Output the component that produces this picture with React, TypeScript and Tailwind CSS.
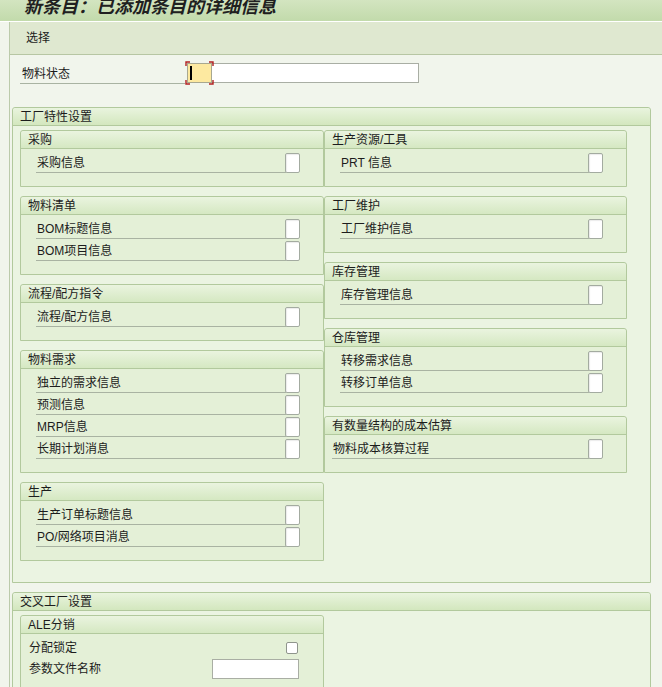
import React from "react";

type Row = { label: string };
type Group = { title: string; rows: Row[]; indent?: string };

const leftGroups: Group[] = [
  { title: "采购", rows: [{ label: "采购信息" }] },
  { title: "物料清单", rows: [{ label: "BOM标题信息" }, { label: "BOM项目信息" }] },
  { title: "流程/配方指令", rows: [{ label: "流程/配方信息" }] },
  {
    title: "物料需求",
    rows: [{ label: "独立的需求信息" }, { label: "预测信息" }, { label: "MRP信息" }, { label: "长期计划消息" }],
  },
  { title: "生产", rows: [{ label: "生产订单标题信息" }, { label: "PO/网络项目消息" }] },
];

const rightGroups: Group[] = [
  { title: "生产资源/工具", rows: [{ label: "PRT 信息" }] },
  { title: "工厂维护", rows: [{ label: "工厂维护信息" }] },
  { title: "库存管理", rows: [{ label: "库存管理信息" }] },
  { title: "仓库管理", rows: [{ label: "转移需求信息" }, { label: "转移订单信息" }] },
  { title: "有数量结构的成本估算", rows: [{ label: "物料成本核算过程" }], indent: "pl-[7px]" },
];

function CheckBox() {
  return (
    <div className="h-[20px] w-[15px] shrink-0 rounded-[2px] border border-[#a3aba0] bg-white shadow-[inset_1px_1px_1px_rgba(0,0,0,0.08)]" />
  );
}

function SubHeader({ title }: { title: string }) {
  return (
    <div className="flex h-[18px] items-center rounded-t-[3px] border-b border-[#b2c99d] bg-gradient-to-b from-[#eaf4df] to-[#d5e8c2] pl-[7px] leading-none text-[#1c1c1c]">
      {title}
    </div>
  );
}

function SubGroup({ group }: { group: Group }) {
  return (
    <div className="rounded-t-[3px] border border-[#b2c99d] bg-[#e4f0d7]">
      <SubHeader title={group.title} />
      <div className={`pt-[3px] pb-[12px] pr-[23px] ${group.indent ?? "pl-[15px]"}`}>
        {group.rows.map((r) => (
          <div key={r.label} className="flex h-[22px] items-start">
            <div className="h-[21px] flex-1 border-b border-[#a9b3a2] pl-[1px] leading-[22px]">{r.label}</div>
            <div className="-ml-[1px] pt-[1px]">
              <CheckBox />
            </div>
          </div>
        ))}
      </div>
    </div>
  );
}

function FrameHeader({ title }: { title: string }) {
  return (
    <div className="flex h-[18px] items-center rounded-t-[3px] border-b border-[#b2c99d] bg-gradient-to-b from-[#e9f4de] to-[#d3e7be] pl-[7px] leading-none text-[#1c1c1c]">
      {title}
    </div>
  );
}

export default function App() {
  return (
    <div
      className="h-[687px] w-[662px] overflow-hidden bg-[#f1f5ec] text-[12px] text-[#1c1c1c]"
      style={{ fontFamily: '"Liberation Sans", "Noto Sans CJK SC", sans-serif' }}
    >
      {/* Title bar */}
      <div className="h-[22px] overflow-hidden border-b border-white bg-gradient-to-b from-[#d3e5c0] to-[#c2daab]">
        <div className="-mt-[5px] pl-[24px] text-[18px] font-bold italic leading-[24px] text-[#202020]">
          新条目：已添加条目的详细信息
        </div>
      </div>

      <div className="ml-[9px] h-full border-l border-[#bccbab]">
        {/* Menu bar */}
        <div className="flex h-[33px] items-center border-b border-[#b7c6a3] bg-[#dfe8d0] pl-[16px]">选择</div>

        {/* Status row */}
        <div className="mt-[7px] flex h-[22px] items-center">
          <div className="ml-[10px] h-[21px] w-[165px] border-b border-[#a9b3a2] pl-[2px] leading-[22px]">物料状态</div>
          <div className="relative ml-[2px] flex h-[20px] items-center">
            <div className="flex h-[20px] w-[25px] items-center border border-[#a8a890] bg-[#fde9a0] pl-[2px]">
              <div className="h-[14px] w-[2px] bg-black" />
            </div>
            <div className="h-[20px] w-[207px] border border-l-0 border-[#a9aea4] bg-white" />
            <svg className="absolute -left-[2px] -top-[2px]" width="29" height="24" viewBox="0 0 29 24" fill="none">
              <path d="M1 5V1h4M24 1h4v4M28 19v4h-4M5 23H1v-4" stroke="#b22020" strokeWidth="1.4" />
            </svg>
          </div>
        </div>

        {/* 工厂特性设置 */}
        <div className="ml-[2px] mt-[23px] w-[639px] rounded-t-[3px] border border-[#b2c99d] bg-[#ebf4e2]">
          <FrameHeader title="工厂特性设置" />
          <div className="flex items-start pt-[4px] pb-[21px] pl-[7px]">
            <div className="flex w-[304px] flex-col gap-[9px]">
              {leftGroups.map((g) => (
                <SubGroup key={g.title} group={g} />
              ))}
            </div>
            <div className="flex w-[303px] flex-col gap-[9px]">
              {rightGroups.map((g) => (
                <SubGroup key={g.title} group={g} />
              ))}
            </div>
          </div>
        </div>

        {/* 交叉工厂设置 */}
        <div className="ml-[2px] mt-[9px] h-[120px] w-[639px] rounded-t-[3px] border border-[#b2c99d] bg-[#ebf4e2]">
          <FrameHeader title="交叉工厂设置" />
          <div className="pt-[4px] pl-[7px]">
            <div className="h-[100px] w-[304px] rounded-t-[3px] border border-[#b2c99d] bg-[#e4f0d7]">
              <SubHeader title="ALE分销" />
              <div className="pt-[3px] pl-[8px] pr-[24px]">
                <div className="flex h-[21px] items-center justify-between">
                  <span>分配锁定</span>
                  <div className="mr-[1px] h-[12px] w-[12px] rounded-[2px] border border-[#8f958c] bg-white" />
                </div>
                <div className="flex h-[22px] items-center justify-between">
                  <span>参数文件名称</span>
                  <div className="h-[20px] w-[87px] border border-[#a9aea4] bg-white" />
                </div>
              </div>
            </div>
          </div>
        </div>
      </div>
    </div>
  );
}
